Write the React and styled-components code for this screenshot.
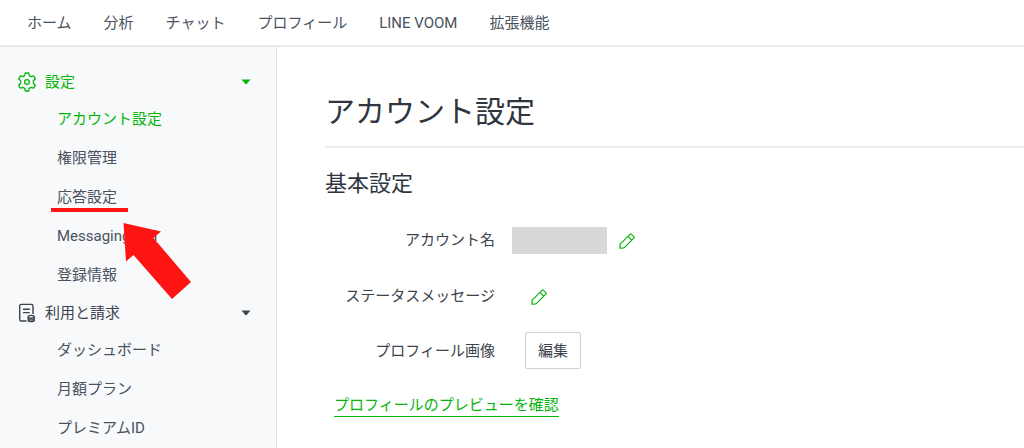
import React, { useState } from 'react'
import styled, { createGlobalStyle } from 'styled-components';

const GREEN = '#06b50b';

const GlobalStyle = createGlobalStyle`
	* {
		box-sizing: border-box;
	}

	body {
		margin: 0;
		background: #fff;
		color: #3c434d;
		font-family: Roboto, "Noto Sans CJK JP", sans-serif;
		font-size: 15px;
		line-height: 20px;
	}
`;

const Page = styled.div`
	display: flex;
	flex-direction: column;
	min-height: 100vh;
`;

const Header = styled.header`
	border-bottom: 2px solid #ebecee;
`;

const Nav = styled.nav`
	display: flex;
	gap: 32px;
	padding: 13px 27px 12px;
`;

const NavLink = styled.a`
	color: #4a525e;
	text-decoration: none;
	white-space: nowrap;
`;

const Body = styled.div`
	display: flex;
	flex: 1;
`;

const Sidebar = styled.aside`
	flex: none;
	width: 277px;
	max-height: calc(100vh - 47px);
	padding-top: 16px;
	overflow: hidden;
	background: #f8f9fb;
	border-right: 1px solid #dfe2e6;
`;

const GroupButton = styled.button`
	display: flex;
	align-items: center;
	gap: 8px;
	width: 100%;
	height: 36px;
	padding: 2px 25px 0 17px;
	border: 0;
	background: none;
	color: ${props => (props.$active ? GREEN : '#3c434d')};
	font: inherit;
	cursor: pointer;
`;

const Caret = styled.svg`
	margin-left: auto;
`;

const Menu = styled.ul`
	margin: 0;
	padding: 0 0 0 57px;
	list-style: none;
`;

const MenuItem = styled.li`
	position: relative;
	display: flex;
	align-items: center;
	height: 39px;
`;

const MenuLink = styled.a`
	color: ${props => (props.$active ? GREEN : '#4a525e')};
	text-decoration: none;
`;

const Underline = styled.span`
	position: absolute;
	top: 31px;
	left: -6px;
	width: 77px;
	height: 4px;
	background: #ff1414;
`;

const Arrow = styled.svg`
	position: absolute;
	z-index: 1;
	top: 45px;
	left: 66px;
	pointer-events: none;
`;

const Main = styled.main`
	flex: 1;
	min-width: 0;
	padding: 45px 0 24px 48px;
`;

const Title = styled.h1`
	margin: 0;
	padding-bottom: 14px;
	border-bottom: 2px solid #ebecee;
	color: #30363f;
	font-size: 30px;
	font-weight: 400;
	line-height: 40px;
`;

const SectionTitle = styled.h2`
	margin: 20px 0 12px;
	color: #30363f;
	font-size: 22px;
	font-weight: 400;
	line-height: 32px;
`;

const Row = styled.div`
	display: flex;
	align-items: center;
	height: ${props => (props.$tall ? '56px' : '55px')};
`;

const Label = styled.div`
	flex: none;
	width: 170px;
	color: #3c434d;
	text-align: right;
`;

const Value = styled.div`
	display: flex;
	align-items: center;
	gap: 12px;
	padding-left: ${props => (props.$hidden ? '17px' : '30px')};
`;

const Mask = styled.span`
	width: 95px;
	height: 27px;
	background: #d8d8d8;
`;

const IconButton = styled.button`
	display: flex;
	padding: ${props => (props.$inset ? '2px 6px 0' : '2px 0 0')};
	border: 0;
	background: none;
	cursor: pointer;
`;

const EditButton = styled.button`
	height: 37px;
	padding: 0 12px;
	border: 1px solid #ccd1d8;
	border-radius: 2px;
	background: #fff;
	color: #3c434d;
	font: inherit;
`;

const PreviewLink = styled.a`
	display: inline-block;
	margin: 16px 0 0 9px;
	border-bottom: 1px solid ${GREEN};
	color: ${GREEN};
	line-height: 22px;
	text-decoration: none;
`;

const GearIcon = () => (
	<svg width="20" height="20" viewBox="0 0 20 20" fill="none" stroke="currentColor" strokeWidth="1.3" strokeLinejoin="round">
		<path d="M8.300 1h3.400l.6 2.600 1.700 1 2.600-.8 1.800 3-2 1.900v2.600l2 1.900-1.800 3-2.600-.8-1.700 1-.6 2.600H8.300l-.6-2.600-1.700-1-2.600.8-1.800-3 2-1.900V8.700l-2-1.900 1.800-3 2.600.8 1.700-1z" />
		<circle cx="10" cy="10" r="2.400" />
	</svg>
)

const BillIcon = () => (
	<svg width="20" height="20" viewBox="0 0 20 20" fill="none" stroke="currentColor" strokeWidth="1.4">
		<path d="M9.500 18H4.200Q2.700 18 2.700 16.500V2.900Q2.700 1.400 4.200 1.400H14.500Q16 1.400 16 2.900V11" />
		<path d="M6 6.200h6.800M6 9.600h6.800" />
		<ellipse cx="14.200" cy="13.800" rx="3" ry="1.400" />
		<path d="M11.200 14v3.300c0 1.800 6 1.800 6 0V14M11.200 15.700c0 1.600 6 1.600 6 0" />
	</svg>
)

const PencilIcon = () => (
	<svg width="16" height="16" viewBox="0 0 16 16" fill="none" stroke={GREEN} strokeWidth="1.200" strokeLinejoin="round">
		<path d="M.9 15.200l.3-4.100L11 1.300q.7-.7 1.400 0l2.400 2.400q.7.700 0 1.400L5 14.900zM8.900 3.400l3.800 3.800" />
	</svg>
)

const nav = ['ホーム', '分析', 'チャット', 'プロフィール', 'LINE VOOM', '拡張機能'];

const groups = [
	{
		name: '設定',
		icon: <GearIcon />,
		active: true,
		items: ['アカウント設定', '権限管理', '応答設定', 'Messaging API', '登録情報'],
	},
	{
		name: '利用と請求',
		icon: <BillIcon />,
		items: ['ダッシュボード', '月額プラン', 'プレミアムID'],
	},
];

const Pointer = () => (
	<>
		<Underline />
		<Arrow width="70" height="78" viewBox="0 0 70 78" aria-hidden="true">
			<path d="M.5 1L38 9.500 30.500 16 68 60 49 77 10.500 33 3 39.500z" fill="#ff1414" />
		</Arrow>
	</>
)

const MenuGroup = ({ group }) => {
	const [open, setOpen] = useState(true);

	return (
		<>
			<GroupButton type="button" $active={group.active} aria-expanded={open} onClick={() => setOpen(!open)}>
				{group.icon}
				{group.name}
				<Caret width="10" height="6" viewBox="0 0 10 6">
					<path d="M.5.500h9L5.600 4.900q-.6.600-1.200 0z" fill="currentColor" />
				</Caret>
			</GroupButton>
			{open && (
				<Menu>
					{group.items.map(item => (
						<MenuItem key={item}>
							<MenuLink href="#" $active={item === 'アカウント設定'}>{item}</MenuLink>
							{item === '応答設定' && <Pointer />}
						</MenuItem>
					))}
				</Menu>
			)}
		</>
	)
}

export default function App() {
	return (
		<Page>
			<GlobalStyle />
			<Header>
				<Nav>
					{nav.map(name => <NavLink key={name} href="#">{name}</NavLink>)}
				</Nav>
			</Header>
			<Body>
				<Sidebar>
					{groups.map(group => <MenuGroup key={group.name} group={group} />)}
				</Sidebar>
				<Main>
					<Title>アカウント設定</Title>
					<SectionTitle>基本設定</SectionTitle>
					<Row $tall>
						<Label>アカウント名</Label>
						<Value $hidden>
							<Mask />
							<IconButton type="button" aria-label="アカウント名を編集"><PencilIcon /></IconButton>
						</Value>
					</Row>
					<Row>
						<Label>ステータスメッセージ</Label>
						<Value>
							<IconButton type="button" $inset aria-label="ステータスメッセージを編集"><PencilIcon /></IconButton>
						</Value>
					</Row>
					<Row>
						<Label>プロフィール画像</Label>
						<Value>
							<EditButton type="button">編集</EditButton>
						</Value>
					</Row>
					<PreviewLink href="#">プロフィールのプレビューを確認</PreviewLink>
				</Main>
			</Body>
		</Page>
	)
}
